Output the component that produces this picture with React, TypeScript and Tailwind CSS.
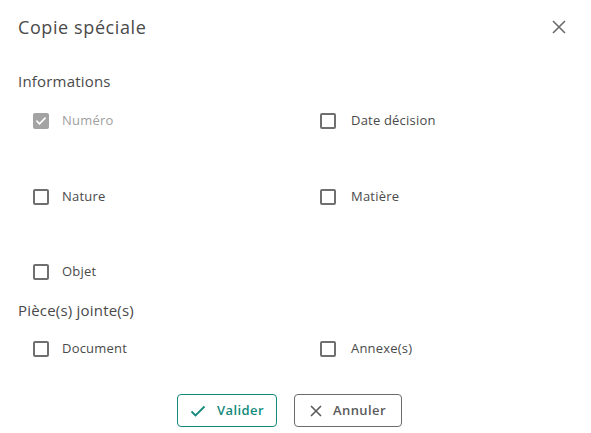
import React from "react";

const font = { fontFamily: '"Open Sans", "Noto Sans", sans-serif' };

function Box({ checked }: { checked?: boolean }) {
  if (checked) {
    return (
      <span className="flex h-[16px] w-[16px] items-center justify-center rounded-[2px] bg-[#a3a3a3]">
        <svg width="12" height="12" viewBox="0 0 24 24" fill="none" stroke="white" strokeWidth="3.2" strokeLinecap="square">
          <path d="M4 12.5l5 5L20 6.5" />
        </svg>
      </span>
    );
  }
  return <span className="block h-[16px] w-[16px] rounded-[2px] border-2 border-[#6f6f6f]" />;
}

function Item({ label, checked, disabled, wide }: { label: string; checked?: boolean; disabled?: boolean; wide?: boolean }) {
  return (
    <div className="flex h-[38px] items-center">
      <Box checked={checked} />
      <span
        className={`${wide ? "ml-[15px]" : "ml-[13px]"} text-[13px] tracking-[0.2px] ${disabled ? "text-[#a0a0a0]" : "text-[#4a4a4a]"}`}
      >
        {label}
      </span>
    </div>
  );
}

export default function App() {
  return (
    <div className="h-[433px] w-[591px] bg-white" style={font}>
      <div className="flex h-[54px] items-center justify-between pl-[18px] pr-[25px]">
        <h1 className="text-[18px] tracking-[0.6px] text-[#4a4a4a]">Copie spéciale</h1>
        <svg width="14" height="14" viewBox="0 0 14 14" stroke="#6b6b6b" strokeWidth="1.6">
          <path d="M1 1L13 13M13 1L1 13" />
        </svg>
      </div>
      <div className="mt-[12px] flex h-[30px] items-center pl-[18px] text-[15px] tracking-[0.2px] text-[#4a4a4a]">Informations</div>
      <div className="mt-[6px] grid grid-cols-[287px_1fr] gap-y-[37.5px] pl-[33px]">
        <Item label="Numéro" checked disabled />
        <Item label="Date décision" wide />
        <Item label="Nature" />
        <Item label="Matière" wide />
        <Item label="Objet" />
      </div>
      <div className="mt-[4px] flex h-[30px] items-center pl-[18px] text-[15px] tracking-[0.2px] text-[#4a4a4a]">Pièce(s) jointe(s)</div>
      <div className="mt-[5px] grid grid-cols-[287px_1fr] pl-[33px]">
        <Item label="Document" />
        <Item label="Annexe(s)" wide />
      </div>
      <div className="mt-[26px] flex justify-center gap-[17px] pr-[12px]">
        <button className="flex h-[33px] w-[100px] items-center justify-center gap-[11px] rounded-[4px] border border-[#138a7c] text-[13px] font-semibold tracking-[0.4px] text-[#138a7c]">
          <svg width="16" height="16" viewBox="0 0 16 16" fill="none" stroke="#138a7c" strokeWidth="1.8">
            <path d="M1.5 8.5l4 4L14.5 3.5" />
          </svg>
          Valider
        </button>
        <button className="flex h-[33px] w-[108px] items-center justify-center gap-[11px] rounded-[4px] border border-[#6b6b6b] text-[13px] font-semibold tracking-[0.4px] text-[#5a5a5a]">
          <svg width="12" height="12" viewBox="0 0 12 12" fill="none" stroke="#5a5a5a" strokeWidth="1.6">
            <path d="M1 1L11 11M11 1L1 11" />
          </svg>
          Annuler
        </button>
      </div>
    </div>
  );
}
